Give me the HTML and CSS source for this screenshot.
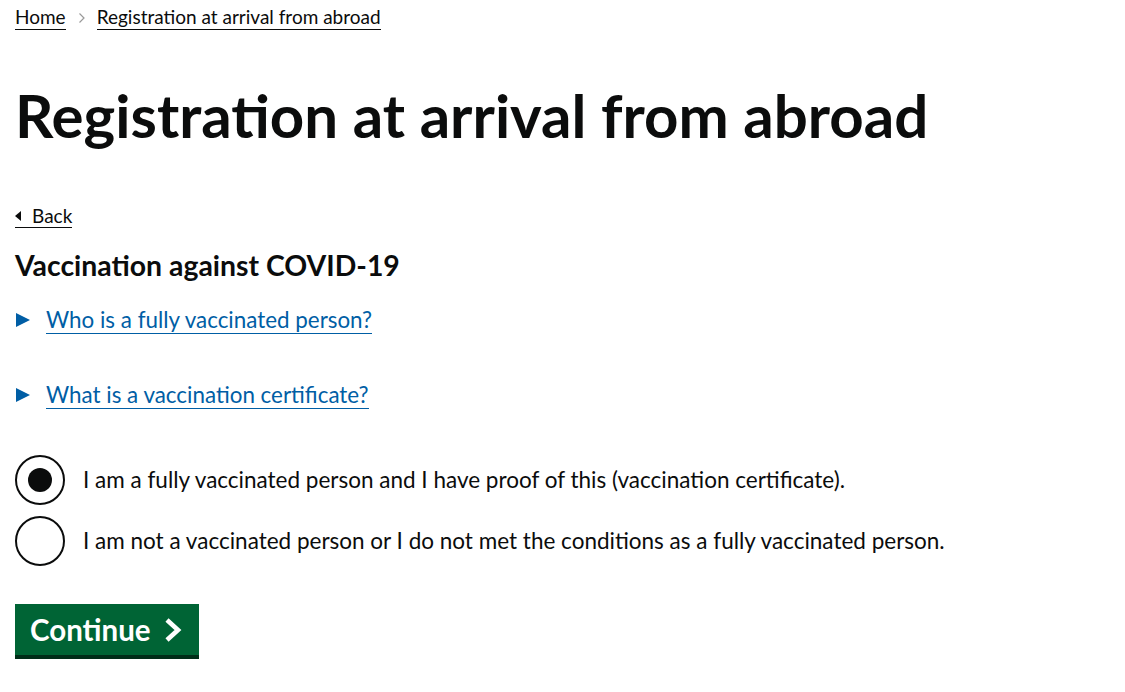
FILE: index.html
```html
<!DOCTYPE html>
<html lang="en">
<head>
    <meta charset="UTF-8">
    <meta name="viewport" content="width=device-width, initial-scale=1.0">
    <title>Registration at arrival from abroad</title>
    <link rel="stylesheet" href="styles.css">
</head>
<body>
    <nav class="breadcrumbs">
        <a href="#">Home</a>
        <span class="crumb-sep">
            <svg width="8" height="12" viewBox="0 0 8 12"><path d="M1.5 1.5 L6 6 L1.5 10.5" fill="none" stroke="#9a9a9a" stroke-width="1.2"/></svg>
        </span>
        <a href="#">Registration at arrival from abroad</a>
    </nav>

    <main class="page">
        <h1 class="page-title">Registration at arrival from abroad</h1>

        <a href="#" class="back-link">
            <svg width="7" height="10" viewBox="0 0 7 10"><path d="M6 0 L6 10 L0 5 Z" fill="#0b0c0c"/></svg>
            Back
        </a>

        <form class="question">
            <h2 class="question-title">Vaccination against COVID-19</h2>

            <details class="hint">
                <summary><span class="hint-arrow"></span><span class="hint-text">Who is a fully vaccinated person?</span></summary>
            </details>
            <details class="hint">
                <summary><span class="hint-arrow"></span><span class="hint-text">What is a vaccination certificate?</span></summary>
            </details>

            <div class="radios">
                <label class="radio">
                    <input type="radio" name="vaccinated" value="yes" checked>
                    <span class="radio-mark"></span>
                    <span class="radio-label">I am a fully vaccinated person and I have proof of this (vaccination certificate).</span>
                </label>
                <label class="radio">
                    <input type="radio" name="vaccinated" value="no">
                    <span class="radio-mark"></span>
                    <span class="radio-label">I am not a vaccinated person or I do not met the conditions as a fully vaccinated person.</span>
                </label>
            </div>

            <button type="submit" class="continue-button">
                Continue
                <svg width="20" height="24" viewBox="0 0 20 24"><path d="M4 2 L15 12 L4 22" fill="none" stroke="#fff" stroke-width="4.6" stroke-linejoin="miter"/></svg>
            </button>
        </form>
    </main>
</body>
</html>
```

FILE: styles.css
```css
body{
    margin: 0;
    font-family: Lato, "Noto Sans", sans-serif;
    color: #0b0c0c;
    background: #fff;
}
a{
    color: #0b0c0c;
}
.breadcrumbs{
    display: flex;
    align-items: center;
    gap: 10px;
    padding: 5px 15px 0;
    font-size: 19px;
    line-height: 24px;
}
.breadcrumbs a{
    text-decoration: none;
    border-bottom: 1px solid #0b0c0c;
}
.crumb-sep{
    display: flex;
    margin: 0 1px 0 2px;
}
.page{
    padding: 0 15px;
}
.page-title{
    margin: 51px 0 0;
    font-size: 60px;
    line-height: 68px;
    font-weight: 700;
}
.back-link{
    display: inline-flex;
    align-items: center;
    gap: 10px;
    margin-top: 56px;
    font-size: 19px;
    line-height: 22px;
    text-decoration: none;
    border-bottom: 1px solid #0b0c0c;
}
.question-title{
    margin: 20px 0 0;
    font-size: 28.4px;
    line-height: 34px;
    font-weight: 700;
}
.hint{
    margin-top: 24px;
}
.hint + .hint{
    margin-top: 47px;
}
.hint summary{
    display: flex;
    align-items: center;
    gap: 16px;
    list-style: none;
    cursor: pointer;
    color: #005ea5;
    font-size: 22.4px;
    line-height: 30px;
}
.hint summary::-webkit-details-marker{
    display: none;
}
.hint-arrow{
    width: 0;
    height: 0;
    margin-left: 1px;
    border-top: 7.5px solid transparent;
    border-bottom: 7.5px solid transparent;
    border-left: 14px solid #005ea5;
}
.hint-text{
    border-bottom: 1px solid #005ea5;
    line-height: 27px;
}
.radios{
    display: flex;
    flex-direction: column;
    gap: 11px;
    margin-top: 46px;
}
.radio{
    display: flex;
    align-items: center;
    gap: 18px;
    cursor: pointer;
}
.radio input{
    position: absolute;
    opacity: 0;
}
.radio-mark{
    position: relative;
    flex: none;
    width: 46px;
    height: 46px;
    border: 2px solid #0b0c0c;
    border-radius: 50%;
}
.radio input:checked + .radio-mark::after{
    content: "";
    position: absolute;
    top: 11px;
    left: 11px;
    width: 24px;
    height: 24px;
    border-radius: 50%;
    background: #0b0c0c;
}
.radio-label{
    font-size: 22.5px;
    line-height: 30px;
}
.continue-button{
    display: inline-flex;
    align-items: center;
    gap: 12px;
    margin-top: 38px;
    padding: 9px 16px 9px 15px;
    border: none;
    border-bottom: 4px solid #002d18;
    border-radius: 0;
    background: #006435;
    color: #fff;
    font-family: inherit;
    font-size: 29.5px;
    line-height: 33px;
    font-weight: 700;
    cursor: pointer;
}
```
